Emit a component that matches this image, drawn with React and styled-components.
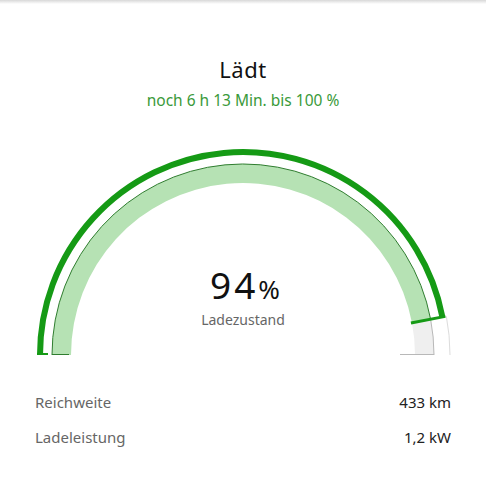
import React from "react";
import styled, { createGlobalStyle } from "styled-components";

const Global = createGlobalStyle`
  html, body { margin: 0; padding: 0; background: #fff; }
  body { font-family: "Noto Sans", "Open Sans", sans-serif; color: #1a1a1a; }
`;

const Page = styled.div`
  width: 486px;
  height: 500px;
  background: #fff;
  display: flex;
  flex-direction: column;
  overflow: hidden;
`;

const TopShade = styled.div`
  height: 4px;
  background: linear-gradient(#d8d8d8, #ffffff);
`;

const Header = styled.header`
  display: flex;
  flex-direction: column;
  align-items: center;
  padding-top: 51px;
`;

const Title = styled.h1`
  margin: 0;
  font-size: 22px;
  line-height: 28px;
  font-weight: 400;
  letter-spacing: 0.5px;
  color: #111;
`;

const Subtitle = styled.div`
  margin-top: 7px;
  font-size: 15.5px;
  line-height: 20px;
  color: #3a9a3a;
`;

const GaugeWrap = styled.div`
  position: relative;
  margin-top: 30px;
  height: 220px;
`;

const GaugeSvg = styled.svg`
  display: block;
  width: 486px;
  height: 220px;
`;

const Center = styled.div`
  position: absolute;
  left: 0;
  right: 0;
  top: 125px;
  display: flex;
  flex-direction: column;
  align-items: center;
`;

const Value = styled.div`
  display: flex;
  align-items: baseline;
  font-size: 37px;
  line-height: 40px;
  color: #111;
  letter-spacing: 3px;
  padding-left: 4px;
`;

const Unit = styled.span`
  font-size: 26px;
  letter-spacing: 0;
`;

const Caption = styled.div`
  margin-top: 2px;
  font-size: 14px;
  line-height: 18px;
  color: #666;
`;

const Stats = styled.div`
  display: flex;
  flex-direction: column;
  gap: 13px;
  padding: 31px 35px 0 35px;
`;

const Row = styled.div`
  display: flex;
  justify-content: space-between;
  font-size: 15px;
  line-height: 22px;
`;

const Label = styled.span`
  color: #666;
`;

const Val = styled.span`
  color: #222;
`;

const CX = 243;
const CY = 215;

function pt(r, deg) {
  const a = (deg * Math.PI) / 180;
  return [CX + r * Math.cos(a), CY - r * Math.sin(a)];
}

function arc(r, from, to) {
  const [x1, y1] = pt(r, from);
  const [x2, y2] = pt(r, to);
  return `M${x1} ${y1} A${r} ${r} 0 0 1 ${x2} ${y2}`;
}

function band(r1, r2, from, to) {
  const [ax, ay] = pt(r2, from);
  const [bx, by] = pt(r2, to);
  const [cx, cy] = pt(r1, to);
  const [dx, dy] = pt(r1, from);
  return `M${ax} ${ay} A${r2} ${r2} 0 0 1 ${bx} ${by} L${cx} ${cy} A${r1} ${r1} 0 0 0 ${dx} ${dy} Z`;
}

function Gauge({ percent }) {
  const end = 180 - (percent / 100) * 180;
  const [m1x, m1y] = pt(171, end);
  const [m2x, m2y] = pt(206, end);
  return (
    <GaugeSvg viewBox="0 0 486 220">
      <path d={band(172, 191, end, 0)} fill="#efefef" />
      <path d={arc(191, end, 0)} fill="none" stroke="#b8b8b8" strokeWidth="1" />
      <line x1="400" y1="214.5" x2="434" y2="214.5" stroke="#b8b8b8" strokeWidth="1" />
      <path d={arc(207, end, 0)} fill="none" stroke="#dcdcdc" strokeWidth="1" />
      <path d={band(172, 191, 180, end)} fill="#b6e2b4" />
      <path d={arc(191, 180, end)} fill="none" stroke="#2f7d2f" strokeWidth="1" />
      <line x1="52" y1="214.5" x2="69" y2="214.5" stroke="#2f7d2f" strokeWidth="1" />
      <path d={arc(203, 180, end)} fill="none" stroke="#159a15" strokeWidth="6" />
      <line x1="37" y1="214" x2="48" y2="214" stroke="#159a15" strokeWidth="2" />
      <line x1={m1x} y1={m1y} x2={m2x} y2={m2y} stroke="#159a15" strokeWidth="3" />
    </GaugeSvg>
  );
}

export default function App() {
  return (
    <Page>
      <Global />
      <TopShade />
      <Header>
        <Title>Lädt</Title>
        <Subtitle>noch 6 h 13 Min. bis 100 %</Subtitle>
      </Header>
      <GaugeWrap>
        <Gauge percent={94} />
        <Center>
          <Value>
            94<Unit>%</Unit>
          </Value>
          <Caption>Ladezustand</Caption>
        </Center>
      </GaugeWrap>
      <Stats>
        <Row>
          <Label>Reichweite</Label>
          <Val>433 km</Val>
        </Row>
        <Row>
          <Label>Ladeleistung</Label>
          <Val>1,2 kW</Val>
        </Row>
      </Stats>
    </Page>
  );
}
